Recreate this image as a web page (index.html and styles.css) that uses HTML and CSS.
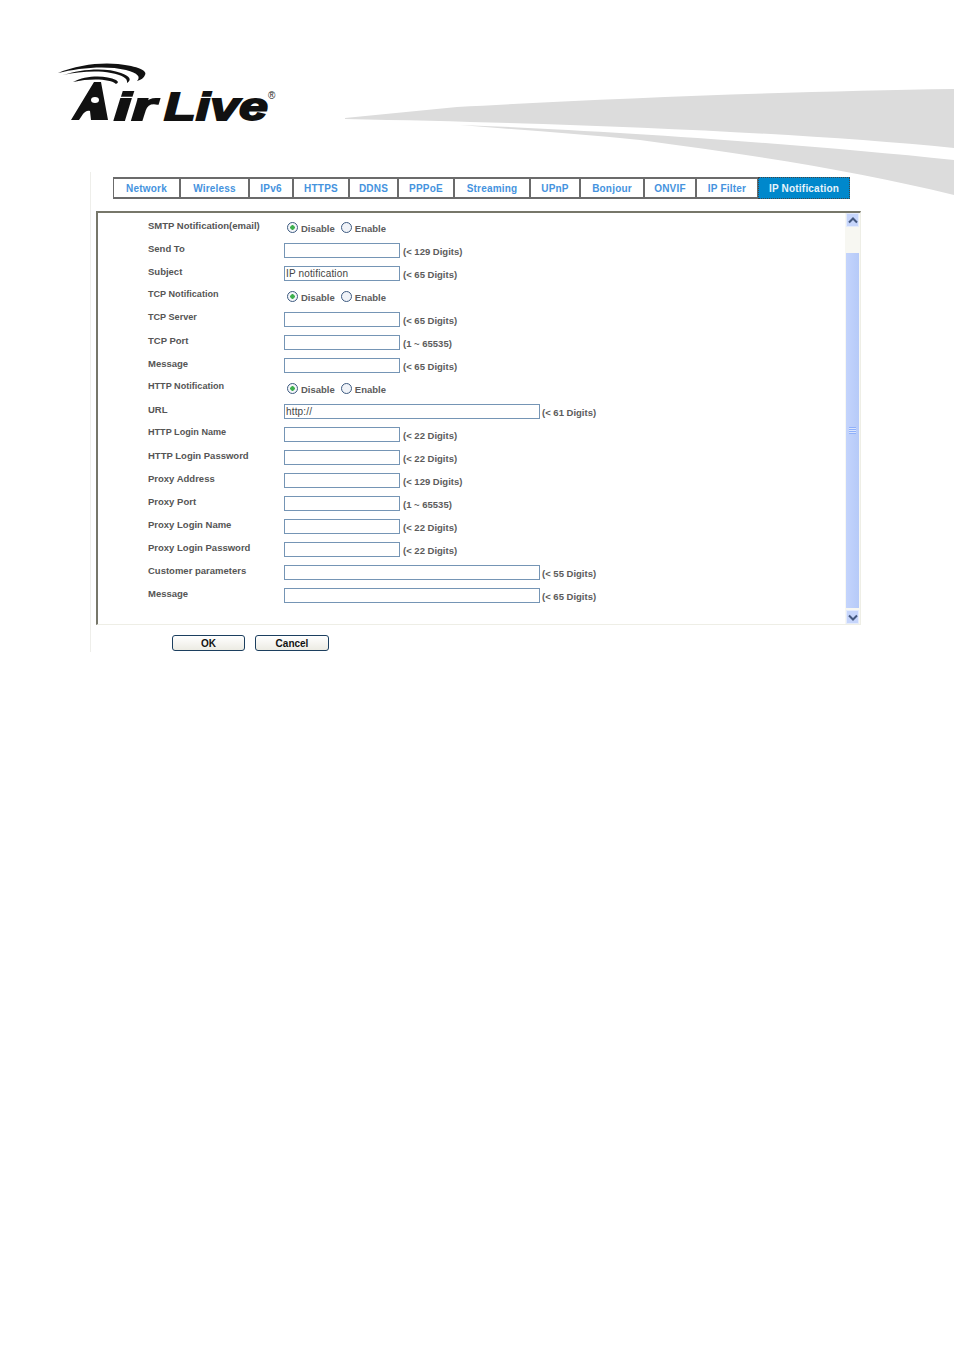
FILE: index.html
```html
<!DOCTYPE html>
<html lang="en">
<head>
<meta charset="utf-8">
<title>IP Notification</title>
<link rel="stylesheet" href="styles.css">
</head>
<body>
<header class="header">
  <svg class="swoosh" viewBox="0 0 954 200" width="954" height="200" aria-hidden="true">
    <path class="swoosh-shape" d="M345 118 L457 107 C600 99 800 91 954 89 L954 148 C800 133 600 124 345 119 Z"/>
    <path class="swoosh-shape" d="M460 125 C600 130 800 144 954 160 L954 195 C860 172 760 156 640 140 C580 134 520 130 460 125 Z"/>
  </svg>
  <svg class="logo" viewBox="0 0 240 70" width="240" height="70" role="img" aria-label="Air Live">
    <path class="logo-arc" d="M2 13 C20 5 45 2 62 4 C82 6 92 11 89 15 C88 18 85 20 81 21 C85 17 82 13 70 10 C50 5 22 8 2 13 Z"/>
    <path class="logo-arc" d="M7 15 C25 9 50 7 65 13 C74 16 76 20 71 23 C72 18 66 15 55 13 C40 10 22 12 7 15 Z"/>
    <path class="logo-arc" d="M17 22 C30 15 50 15 60 20 C63 22 62 23 60 24 C55 19 35 18 17 22 Z"/>
    <path class="logo-mark" d="M38 22 L45 22 L52 60 L35 60 L34 51 C31 50 29 52 27 54 L23 60 L15 60 Z"/>
    <ellipse class="logo-hole" cx="39" cy="40" rx="4" ry="3"/>
    <text class="logo-text" x="58" y="60" textLength="42" lengthAdjust="spacingAndGlyphs">ir</text>
    <text class="logo-text" x="108" y="60" textLength="104" lengthAdjust="spacingAndGlyphs">Live</text>
    <text class="logo-reg" x="212" y="39">®</text>
  </svg>
</header>
<main class="main">
  <nav class="tabs">
    <a class="tab">Network</a>
    <a class="tab">Wireless</a>
    <a class="tab">IPv6</a>
    <a class="tab">HTTPS</a>
    <a class="tab">DDNS</a>
    <a class="tab">PPPoE</a>
    <a class="tab">Streaming</a>
    <a class="tab">UPnP</a>
    <a class="tab">Bonjour</a>
    <a class="tab">ONVIF</a>
    <a class="tab">IP Filter</a>
    <a class="tab tab-active">IP Notification</a>
  </nav>
  <section class="panel">
    <form class="form">
      <div class="row"><span class="label">SMTP Notification(email)</span><span class="radios"><input class="radio" type="radio" name="smtp" checked><span class="opt">Disable</span><input class="radio" type="radio" name="smtp"><span class="opt">Enable</span></span></div>
      <div class="row"><span class="label">Send To</span><input class="field" type="text"><span class="hint">(&lt; 129 Digits)</span></div>
      <div class="row"><span class="label">Subject</span><input class="field" type="text" value="IP notification"><span class="hint">(&lt; 65 Digits)</span></div>
      <div class="row"><span class="label label-small">TCP Notification</span><span class="radios"><input class="radio" type="radio" name="tcp" checked><span class="opt">Disable</span><input class="radio" type="radio" name="tcp"><span class="opt">Enable</span></span></div>
      <div class="row"><span class="label label-small">TCP Server</span><input class="field" type="text"><span class="hint">(&lt; 65 Digits)</span></div>
      <div class="row"><span class="label">TCP Port</span><input class="field" type="text"><span class="hint">(1 ~ 65535)</span></div>
      <div class="row"><span class="label">Message</span><input class="field" type="text"><span class="hint">(&lt; 65 Digits)</span></div>
      <div class="row"><span class="label label-small">HTTP Notification</span><span class="radios"><input class="radio" type="radio" name="http" checked><span class="opt">Disable</span><input class="radio" type="radio" name="http"><span class="opt">Enable</span></span></div>
      <div class="row"><span class="label">URL</span><input class="field field-long" type="text" value="http://"><span class="hint">(&lt; 61 Digits)</span></div>
      <div class="row"><span class="label label-small">HTTP Login Name</span><input class="field" type="text"><span class="hint">(&lt; 22 Digits)</span></div>
      <div class="row"><span class="label">HTTP Login Password</span><input class="field" type="text"><span class="hint">(&lt; 22 Digits)</span></div>
      <div class="row"><span class="label">Proxy Address</span><input class="field" type="text"><span class="hint">(&lt; 129 Digits)</span></div>
      <div class="row"><span class="label">Proxy Port</span><input class="field" type="text"><span class="hint">(1 ~ 65535)</span></div>
      <div class="row"><span class="label">Proxy Login Name</span><input class="field" type="text"><span class="hint">(&lt; 22 Digits)</span></div>
      <div class="row"><span class="label">Proxy Login Password</span><input class="field" type="text"><span class="hint">(&lt; 22 Digits)</span></div>
      <div class="row"><span class="label">Customer parameters</span><input class="field field-long" type="text"><span class="hint">(&lt; 55 Digits)</span></div>
      <div class="row"><span class="label">Message</span><input class="field field-long" type="text"><span class="hint">(&lt; 65 Digits)</span></div>
    </form>
    <div class="scrollbar">
      <div class="sb-btn"><svg viewBox="0 0 10 7" width="10" height="7"><path class="sb-arrow" d="M1 5.5 L5 1.5 L9 5.5"/></svg></div>
      <div class="sb-track"></div>
      <div class="sb-thumb"><span class="sb-grip"></span></div>
      <div class="sb-btn"><svg viewBox="0 0 10 7" width="10" height="7"><path class="sb-arrow" d="M1 1.5 L5 5.5 L9 1.5"/></svg></div>
    </div>
  </section>
  <div class="actions">
    <button class="btn" type="button">OK</button>
    <button class="btn" type="button">Cancel</button>
  </div>
</main>
</body>
</html>
```
FILE: styles.css
```css
* { box-sizing: border-box; }
html, body { margin: 0; padding: 0; background: #fff; }
body { width: 954px; height: 1350px; overflow: hidden; font-family: "Liberation Sans", Arial, sans-serif; }

.header { position: relative; height: 172px; padding: 60px 0 0 56px; }
.swoosh { position: absolute; left: 0; top: 0; }
.swoosh-shape { fill: #dcdcdc; }
.logo { position: relative; display: block; overflow: visible; }
.logo-arc, .logo-mark { fill: #111; }
.logo-hole { fill: #fff; }
.logo-text { font: italic 700 39px "Liberation Sans", Arial, sans-serif; fill: #111; stroke: #111; stroke-width: 1.8px; }
.logo-reg { font: 400 10px "Liberation Sans", Arial, sans-serif; fill: #222; }

.main { position: relative; margin-left: 90px; width: 771px; height: 480px; border-left: 1px solid #eeeeea; padding-top: 5px; }

.tabs { display: grid; grid-template-columns: 67px 69px 44px 56px 49px 56px 76px 50px 64px 52px 62px 92px; margin-left: 22px; height: 22px; }
.tab { display: flex; align-items: center; justify-content: center; border: 2px solid #6b6b6b; border-left-width: 1px; border-right-width: 1px; background: #fff; color: #4593de; font-size: 10px; font-weight: 700; letter-spacing: .2px; white-space: nowrap; }
.tab-active { background: #0088cc; color: #e8f4fb; border: 1px dotted #444; }

.panel { display: flex; margin: 12px 0 0 5px; width: 765px; height: 414px; border-left: 2px solid #77776a; border-top: 2px solid #77776a; border-bottom: 1px solid #eeeee6; border-right: 1px solid #eeeee6; }
.form { flex: 1; padding-top: 3px; }
.row { display: flex; align-items: center; height: 23px; color: #5c5c5c; font-size: 9.5px; font-weight: 700; }
.label { width: 186px; padding: 0 0 5px 50px; white-space: nowrap; color: #555; }
.label-small { font-size: 9.1px; }
.radios { display: flex; align-items: center; }
.radio { appearance: none; width: 11px; height: 11px; margin: 0 3px 0 3px; border: 1px solid #3d5a80; border-radius: 50%; background: #f0f3f8; }
.radio:checked { background: radial-gradient(circle, #3fb04f 0 2px, #f4f6fa 2.5px); }
.opt { margin-right: 3px; padding-top: 2px; }
.field { width: 116px; height: 15px; margin: 0 3px 0 0; padding: 0 1px; border: 1px solid #7595b5; background: #fff; color: #444; font: 400 10px "Liberation Sans", Arial, sans-serif; letter-spacing: .15px; }
.field-long { width: 256px; margin-right: 2px; }
.hint { padding-top: 1px; white-space: nowrap; }

.scrollbar { display: flex; flex-direction: column; width: 15px; padding: 0 1px; background: #f7f7f2; }
.sb-btn { display: flex; align-items: center; justify-content: center; height: 14px; border: 1px solid #e4ebfb; background: #c6d5fb; }
.sb-arrow { fill: none; stroke: #44587f; stroke-width: 2px; }
.sb-track { height: 26px; }
.sb-thumb { flex: 1; display: flex; align-items: center; justify-content: center; margin-bottom: 2px; background: linear-gradient(90deg, #c4d4fc, #b6caf8); }
.sb-grip { width: 7px; height: 7px; background: repeating-linear-gradient(#8fb0fa 0 1px, #dbe5fd 1px 2px); }

.actions { display: flex; gap: 10px; margin: 10px 0 0 81px; }
.btn { width: 73px; height: 16px; padding: 0; border: 1.5px solid #1c3f5f; border-radius: 3px; background: linear-gradient(#fff, #ecebe3); color: #111; font: 700 10px "Liberation Sans", Arial, sans-serif; }
.btn + .btn { width: 74px; }
```
